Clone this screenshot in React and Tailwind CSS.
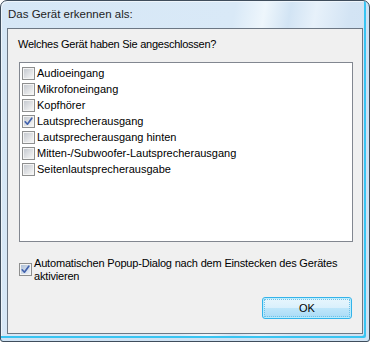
import React from 'react';

const items = [
  { label: 'Audioeingang', checked: false },
  { label: 'Mikrofoneingang', checked: false },
  { label: 'Kopfhörer', checked: false },
  { label: 'Lautsprecherausgang', checked: true },
  { label: 'Lautsprecherausgang hinten', checked: false },
  { label: 'Mitten-/Subwoofer-Lautsprecherausgang', checked: false },
  { label: 'Seitenlautsprecherausgabe', checked: false },
];

// Vista style check box
const CheckBox = ({ checked, tinted }) => (
  <span className="relative flex w-[13px] h-[13px] shrink-0 border border-[#8e8f8f] bg-[#f4f4f4] p-[1px]">
    <span
      className={`flex-1 bg-gradient-to-br ${
        tinted ? 'from-[#aebfd6] to-[#eef3f9]' : 'from-[#c6cad0] to-[#f6f6f6]'
      }`}
    ></span>
    {checked && (
      <svg className="absolute -left-px -top-px" width="13" height="13" viewBox="0 0 13 13">
        <path d="M3.2 6.8 L5.4 9.2 L9.8 3.2" fill="none" stroke="#4262ad" strokeWidth="1.7" strokeLinecap="round" strokeLinejoin="round" />
      </svg>
    )}
  </span>
);

const App = () => {
  return (
    <div
      className="w-[370px] h-[342px] flex flex-col border border-[#3f4d5c] rounded-t-[7px] rounded-b-[3px] bg-[linear-gradient(100deg,#d6e7f6_0%,#d9e9f7_55%,#eef6fc_62%,#d2e4f4_68%,#e7f1fa_74%,#d3e4f4_82%,#cfe1f2_100%)] shadow-[inset_-3px_-3px_0_#cfe2f3,inset_-5px_-5px_0_#38c4f2,inset_1px_1px_0_#eef5fb] text-black"
      style={{ fontFamily: '"Liberation Sans", Arial, sans-serif' }}
    >
      {/* Title */}
      <div className="h-[27px] shrink-0 pl-[7px] pt-[5px] text-[11.5px] leading-[16px] text-[#1e1e1e]">
        Das Gerät erkennen als:
      </div>

      {/* Client area */}
      <div className="flex-1 flex flex-col mx-[6px] mb-[7px] border border-[#6c7784] bg-[#f0f0f0] text-[11px]">
        <div className="pl-[10px] pt-[7px] leading-[16px] tracking-[-0.25px]">Welches Gerät haben Sie angeschlossen?</div>

        {/* List */}
        <div className="ml-[11px] mr-[9px] mt-[10px] h-[180px] border border-[#828790] bg-white pl-[2px] pt-[2px]">
          {items.map((item, i) => (
            <div key={i} className="flex items-center h-[16px] gap-[2px] leading-[16px]">
              <CheckBox checked={item.checked} />
              <span>{item.label}</span>
            </div>
          ))}
        </div>

        {/* Popup option */}
        <div className="flex items-start gap-[2px] ml-[11px] mt-[15px]">
          <span className="mt-[6px]">
            <CheckBox checked tinted />
          </span>
          <span className="leading-[13px] tracking-[-0.18px]">
            Automatischen Popup-Dialog nach dem Einstecken des Gerätes
            <br />
            aktivieren
          </span>
        </div>

        {/* Buttons */}
        <div className="flex justify-end mt-[14px] mr-[10px]">
          <button className="w-[90px] h-[22px] rounded-[3px] border border-[#33b3ea] bg-[linear-gradient(#e8f6fd_0%,#d9f0fc_50%,#bee6fa_51%,#a9dbf6_100%)] p-[1px] shadow-[inset_0_0_0_1px_#b8ecfd]">
            <span className="flex h-full items-center justify-center border border-dotted border-[#6fc2e8] text-[11px] leading-none">
              OK
            </span>
          </button>
        </div>
      </div>
    </div>
  );
};

export default App;
